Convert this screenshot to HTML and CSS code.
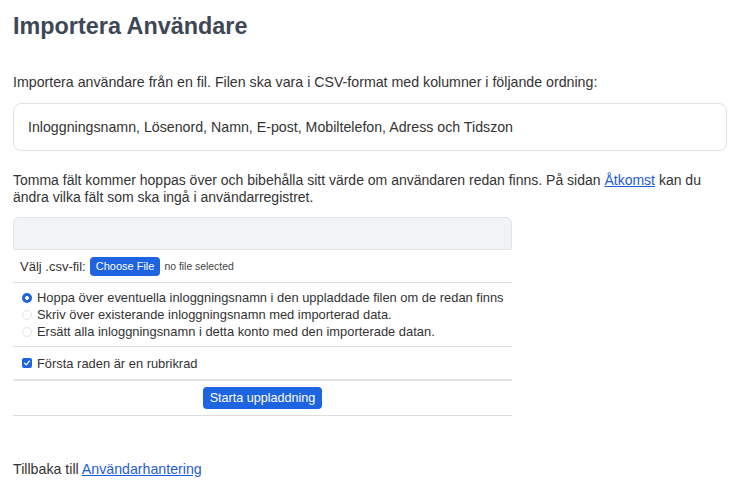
FILE: index.html
```html
<!DOCTYPE html>
<html lang="sv">
<head>
<meta charset="utf-8">
<title>Importera Användare</title>
<link rel="stylesheet" href="styles.css">
</head>
<body>
<main class="page">
  <h1 class="title">Importera Användare</h1>
  <p class="intro">Importera användare från en fil. Filen ska vara i CSV-format med kolumner i följande ordning:</p>
  <div class="columns-box">Inloggningsnamn, Lösenord, Namn, E-post, Mobiltelefon, Adress och Tidszon</div>
  <p class="note">Tomma fält kommer hoppas över och bibehålla sitt värde om användaren redan finns. På sidan <a href="#">Åtkomst</a> kan du ändra vilka fält som ska ingå i användarregistret.</p>

  <form class="upload">
    <div class="upload-head"></div>
    <div class="row file-row">
      <span class="file-label">Välj .csv-fil:</span>
      <span class="file-btn">Choose File</span>
      <span class="file-none">no file selected</span>
    </div>
    <div class="row options">
      <label class="opt"><span class="radio on"></span>Hoppa över eventuella inloggningsnamn i den uppladdade filen om de redan finns</label>
      <label class="opt"><span class="radio"></span>Skriv över existerande inloggningsnamn med importerad data.</label>
      <label class="opt"><span class="radio"></span>Ersätt alla inloggningsnamn i detta konto med den importerade datan.</label>
    </div>
    <div class="row check-row">
      <label class="opt"><span class="check"><svg viewBox="0 0 10 10" width="8" height="8"><path d="M2 5.3 L4.1 7.3 L8 2.6" fill="none" stroke="#fff" stroke-width="1.6" stroke-linecap="round" stroke-linejoin="round"/></svg></span>Första raden är en rubrikrad</label>
    </div>
    <div class="row submit-row">
      <span class="submit">Starta uppladdning</span>
    </div>
  </form>

  <p class="back">Tillbaka till <a href="#">Användarhantering</a></p>
</main>
</body>
</html>
```

FILE: styles.css
```css
* { box-sizing: border-box; }
html, body { margin: 0; padding: 0; background: #fff; }
body {
  font-family: "Liberation Sans", Arial, sans-serif;
  color: #333;
}
.page { padding: 0 14px 0 13px; }
.title {
  margin: 0;
  padding-top: 11px;
  font-size: 23.4px;
  line-height: 30px;
  font-weight: 700;
  color: #3e4756;
}
.intro {
  margin: 32px 0 0;
  font-size: 14.2px;
  line-height: 18px;
  color: #333;
}
.columns-box {
  margin-top: 12px;
  height: 48px;
  border: 1px solid #e2e2e2;
  border-radius: 8px;
  padding: 0 14px;
  display: flex;
  align-items: center;
  font-size: 14.2px;
  color: #333;
}
.note {
  margin: 21px 0 0;
  font-size: 14px;
  line-height: 16.5px;
  color: #333;
}
a { color: #1f5bd6; text-decoration: underline; }
.upload {
  margin-top: 12px;
  width: 499px;
  font-size: 13px;
  color: #333;
}
.upload-head {
  height: 33px;
  background: #f1f3f5;
  border: 1px solid #e3e5e8;
  border-radius: 6px 6px 0 0;
}
.row { border-bottom: 1px solid #dcdcdc; }
.file-row {
  height: 33px;
  display: flex;
  align-items: center;
  padding-left: 7px;
  gap: 4px;
}
.file-label { font-size: 13px; }
.file-btn {
  background: #1e63e0;
  color: #fff;
  font-size: 11px;
  padding: 3px 6px;
  border-radius: 4px;
  line-height: 13px;
}
.file-none { font-size: 10.4px; color: #444; }
.options {
  height: 64px;
  padding: 6px 0 0 9px;
  display: flex;
  flex-direction: column;
}
.opt {
  display: flex;
  align-items: center;
  line-height: 17px;
  font-size: 12.9px;
}
.radio {
  width: 10px;
  height: 10px;
  border-radius: 50%;
  border: 1px solid #e4e4e4;
  background: #fff;
  margin-right: 5px;
  flex: none;
}
.radio.on {
  border: none;
  background: radial-gradient(circle, #fff 0 1.7px, #1f63e0 2.2px);
}
.check-row {
  height: 34px;
  display: flex;
  align-items: center;
  padding-left: 9px;
  border-bottom: 2px solid #e6e6e6;
}
.check {
  width: 10px;
  height: 10px;
  border-radius: 2px;
  background: #1f63e0;
  margin-right: 5px;
  display: flex;
  align-items: center;
  justify-content: center;
  flex: none;
}
.submit-row {
  height: 35px;
  display: flex;
  justify-content: center;
  align-items: center;
}
.submit {
  background: #1e63e0;
  color: #fff;
  font-size: 12.6px;
  line-height: 22px;
  padding: 0 7px;
  border-radius: 4px;
}
.back {
  margin: 45px 0 0;
  font-size: 14.2px;
  color: #333;
}
```
